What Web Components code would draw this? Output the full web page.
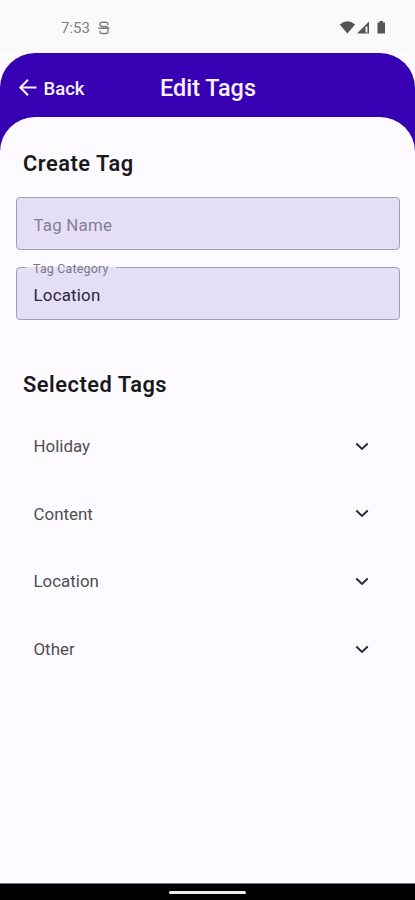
<!DOCTYPE html>
<html lang="en">
<head>
<meta charset="utf-8">
<title>Edit Tags</title>
<style>
html,body{margin:0;height:100%}
body{background:#fdfbff;font-family:Roboto,"Liberation Sans",sans-serif;overflow:hidden}
</style>
</head>
<body>
<edit-tags-screen></edit-tags-screen>
<script>
const define = (name, html) => customElements.define(name, class extends HTMLElement {
  constructor() {
    super();
    const t = document.createElement('template');
    t.innerHTML = html;
    this.attachShadow({ mode: 'open' }).append(t.content.cloneNode(true));
  }
});

define('status-bar', `
<style>
:host{display:flex;height:53px;box-sizing:border-box;padding:3px 28px 0 61px;align-items:center;background:#fafafa;color:#808080;font-size:15px;line-height:20px}
.app{margin-left:8px}
.icons{margin-left:auto;display:flex;align-items:center}
svg{display:block}
</style>
<span>7:53</span>
<svg class="app" width="12" height="14" viewBox="0 0 12 14" fill="none" stroke="#808080" stroke-width="1.400"><path d="M9.800 4V3Q9.800 1.200 8 1.200H4Q2 1.200 2 3.300T4 5.500H8Q10 5.500 10 8V10.300Q10 12.500 8 12.500H4Q2 12.500 2 10.500V9.800M0.300 7.300H11.500"/></svg>
<div class="icons">
<svg width="48" height="16" viewBox="0 0 48 16" fill="#555"><path d="M0.700 4.400Q8.400-1.800 16.100 4.400L8.400 13.500Z"/><path d="M30 1.500V13.500H18Z"/><path d="M26.500 6.500H28.500V12.500H26.500Z" fill="#e8e8e8"/><path d="M38.500 2.500H40.500V1H44V2.500H46V13.500H38.500Z"/></svg>
</div>`);

define('app-header', `
<style>
:host{display:grid;grid-template-columns:1fr auto 1fr;height:98px;box-sizing:border-box;padding:4px 17px 32px 18px;align-items:center;background:#3700b3;color:#f6f1ff;border-radius:35px 35px 0 0;font-weight:500}
.back{display:flex;align-items:center;gap:5.500px;font-size:18.500px;padding-top:1px}
.title{font-size:23.400px;line-height:30px}
svg{display:block;margin-top:-1px}
</style>
<div class="back"><svg width="20" height="20" viewBox="0 0 20 20" fill="none" stroke="currentColor" stroke-width="2"><path d="M18.500 9.500H3M10 1.800L2.300 9.500L10 17.200"/></svg><span>Back</span></div>
<div class="title"><slot></slot></div>`);

define('section-title', `
<style>:host{display:block;margin:0 23px;font-size:21.800px;line-height:28px;font-weight:600;color:#19191c;letter-spacing:.53px}</style>
<slot></slot>`);

define('text-field', `
<style>
:host{display:block;position:relative;height:53px;box-sizing:border-box;margin:0 15px 0 16px;padding:0 16.500px;border:1px solid #a39eb0;border-radius:4px;background:#e4dff6;color:#2c2937;font-size:16.900px;line-height:54px;letter-spacing:.2px}
:host([placeholder]){color:#858090}
.label{position:absolute;left:9px;top:-8px;padding:0 7px;line-height:17px;font-size:12.400px;color:#7c7784;background:linear-gradient(#fdfbff 7px,#e4dff6 7px)}
:host([placeholder]) .label{display:none}
</style>
<span class="label"><slot name="label"></slot></span><slot></slot>`);

define('tag-row', `
<style>
:host{display:flex;height:67.600px;align-items:center;justify-content:space-between;padding:0 46px 0 33.500px;font-size:16.900px;color:#4f4e53}
svg{display:block}
</style>
<span><slot></slot></span>
<svg width="14" height="9" viewBox="0 0 14 9" fill="none" stroke="#29282c" stroke-width="1.900"><path d="M1.300 1.500L7 7L12.700 1.500"/></svg>`);

define('home-bar', `
<style>
:host{display:flex;justify-content:center;height:17px;box-sizing:border-box;padding-top:7px;background:#000;border-top:1px solid #777}
i{display:block;width:77px;height:3px;border-radius:2px;background:#eee}
</style><i></i>`);

define('edit-tags-screen', `
<style>
:host{display:flex;flex-direction:column;height:900px;background:#fdfbff}
status-bar,app-header,home-bar{flex:none}
main{flex:1;margin-top:-34px;padding-top:33px;background:#fdfbff;border-radius:35px 35px 0 0}
text-field.name{margin-top:19px}
text-field.category{margin-top:16.500px}
section-title.selected{margin-top:51px}
.list{margin-top:14px}
</style>
<status-bar></status-bar>
<app-header>Edit Tags</app-header>
<main>
<section-title>Create Tag</section-title>
<text-field class="name" placeholder>Tag Name</text-field>
<text-field class="category"><span slot="label">Tag Category</span>Location</text-field>
<section-title class="selected">Selected Tags</section-title>
<div class="list"><tag-row>Holiday</tag-row><tag-row>Content</tag-row><tag-row>Location</tag-row><tag-row>Other</tag-row></div>
</main>
<home-bar></home-bar>`);
</script>
</body>
</html>
